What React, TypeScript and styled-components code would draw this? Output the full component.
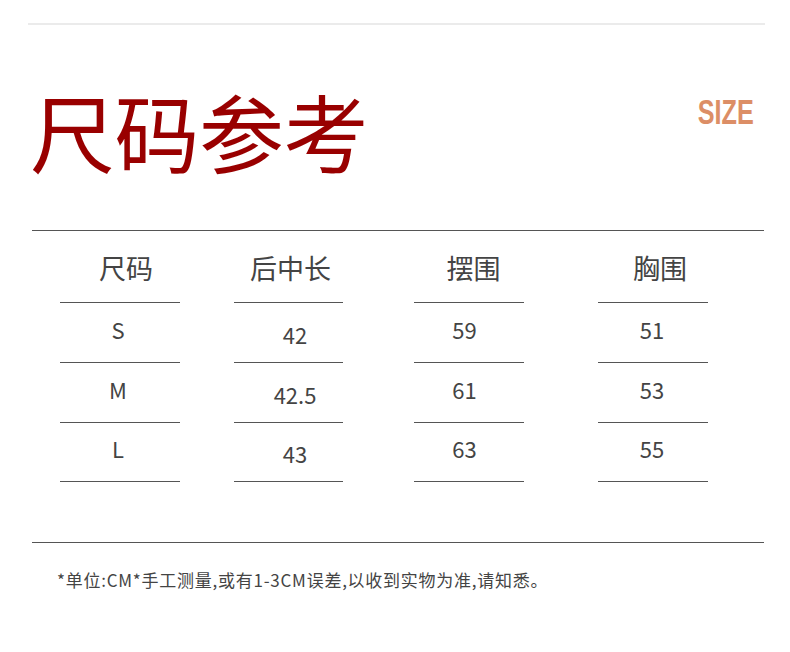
import { FC } from "react";
import styled, { createGlobalStyle } from "styled-components";

const GlobalStyle = createGlobalStyle`
  html, body {
    margin: 0;
    padding: 0;
    background: #fff;
  }
  body {
    font-family: "Noto Sans CJK SC", "Noto Sans", sans-serif;
  }
`

type ColumnType = {
  title: string
  values: string[]
  left: number
  width: number
  headShift: number
  valShift: number
  valDrop: number
}

const columns: ColumnType[] = [
  { title: "尺码", values: ["S", "M", "L"], left: 28, width: 120, headShift: 6, valShift: -2, valDrop: -4 },
  { title: "后中长", values: ["42", "42.5", "43"], left: 54, width: 109, headShift: 2, valShift: 6.5, valDrop: 1 },
  { title: "摆围", values: ["59", "61", "63"], left: 71, width: 110, headShift: 4.5, valShift: -4.5, valDrop: -4 },
  { title: "胸围", values: ["51", "53", "55"], left: 74, width: 110, headShift: 7, valShift: -1, valDrop: -4 },
]

const Column: FC<ColumnType> = (props) => {
  return (
    <Col $left={props.left} $width={props.width}>
      <Head $shift={props.headShift}>{props.title}</Head>
      {props.values.map((v) => (
        <Cell key={v} $shift={props.valShift} $drop={props.valDrop}>{v}</Cell>
      ))}
    </Col>
  )
}

export default function App() {
  return (
    <Page>
      <GlobalStyle />
      <TopRule />
      <TitleRow>
        <Title>尺码参考</Title>
        <SizeTag>SIZE</SizeTag>
      </TitleRow>
      <Table>
        <Columns>
          {columns.map((c) => <Column key={c.title} {...c} />)}
        </Columns>
      </Table>
      <Note>*单位:CM*手工测量,或有1-3CM误差,以收到实物为准,请知悉。</Note>
    </Page>
  )
}

const Page = styled.div`
  width: 790px;
  height: 652px;
  background: #fff;
  overflow: hidden;
`

const TopRule = styled.div`
  margin: 23px 0 0 28px;
  width: 737px;
  height: 2px;
  background: #ebebeb;
`

const TitleRow = styled.div`
  display: flex;
  justify-content: space-between;
  align-items: flex-start;
  margin: 62px 36px 0 30px;
  height: 143px;
`

const Title = styled.div`
  font-size: 85px;
  line-height: 85px;
  color: #990000;
  font-weight: 400;
  letter-spacing: -0.5px;
`

const SizeTag = styled.div`
  font-family: "Liberation Sans", Arial, sans-serif;
  font-weight: 700;
  font-size: 35px;
  line-height: 35px;
  margin-top: 7px;
  color: #dc8e66;
  transform: scaleX(0.72);
  transform-origin: right center;
`

const Table = styled.div`
  margin: 0 26px 0 32px;
  border-top: 1px solid #555;
  border-bottom: 1px solid #555;
  padding-bottom: 60px;
`

const Columns = styled.div`
  display: flex;
`

const Col = styled.div<{ $left: number; $width: number }>`
  margin-left: ${(p) => p.$left}px;
  width: ${(p) => p.$width}px;
  & > div:last-child {
    border-bottom: 1px solid #555;
  }
`

const Head = styled.div<{ $shift: number }>`
  height: 71px;
  line-height: 73px;
  font-size: 27px;
  color: #444;
  text-align: center;
  white-space: nowrap;
  padding-left: ${(p) => Math.max(0, p.$shift * 2)}px;
  padding-right: ${(p) => Math.max(0, -p.$shift * 2)}px;
`

const Cell = styled.div<{ $shift: number; $drop: number }>`
  box-sizing: border-box;
  height: 60px;
  border-top: 1px solid #555;
  display: flex;
  align-items: center;
  justify-content: center;
  font-size: 22px;
  line-height: 30px;
  color: #444;
  padding-top: ${(p) => Math.max(0, p.$drop * 2)}px;
  padding-bottom: ${(p) => Math.max(0, -p.$drop * 2)}px;
  padding-left: ${(p) => Math.max(0, p.$shift * 2)}px;
  padding-right: ${(p) => Math.max(0, -p.$shift * 2)}px;
`

const Note = styled.div`
  margin: 26px 0 0 57px;
  font-size: 17px;
  line-height: 22px;
  letter-spacing: 0.75px;
  color: #444;
`
